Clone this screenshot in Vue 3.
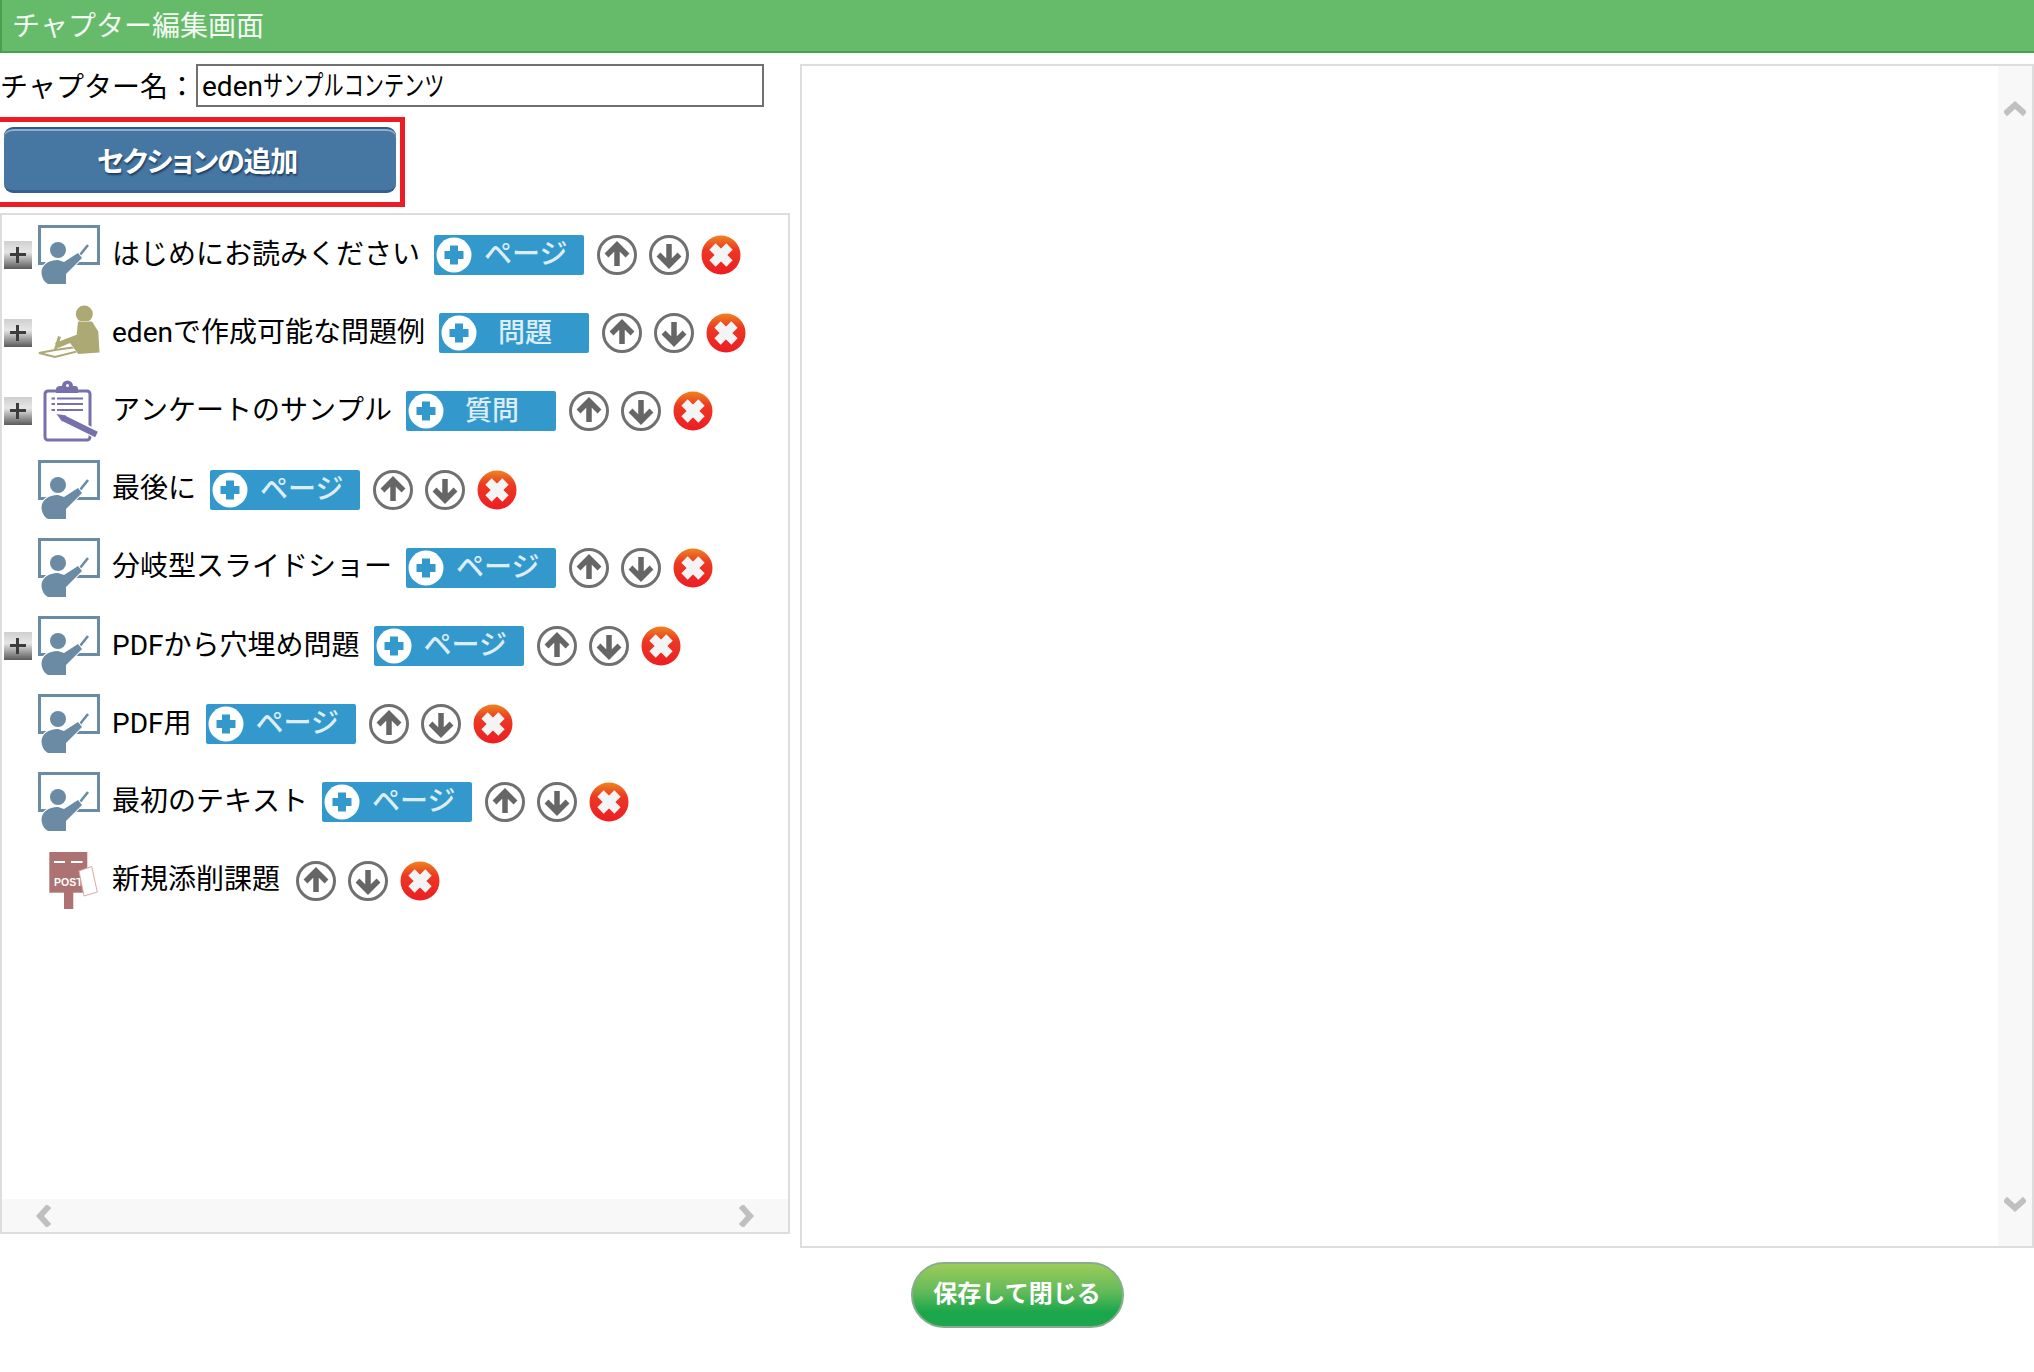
<script setup>
const sections = [
  { id: 1, icon: "teacher", label: "はじめにお読みください", add: "ページ", open: true },
  { id: 2, icon: "student", label: "edenで作成可能な問題例", add: "問題", open: true },
  { id: 3, icon: "survey", label: "アンケートのサンプル", add: "質問", open: true },
  { id: 4, icon: "teacher", label: "最後に", add: "ページ", open: false },
  { id: 5, icon: "teacher", label: "分岐型スライドショー", add: "ページ", open: false },
  { id: 6, icon: "teacher", label: "PDFから穴埋め問題", add: "ページ", open: true },
  { id: 7, icon: "teacher", label: "PDF用", add: "ページ", open: false },
  { id: 8, icon: "teacher", label: "最初のテキスト", add: "ページ", open: false },
  { id: 9, icon: "post", label: "新規添削課題", add: "", open: false },
];
</script>

<template>
  <div class="page">
    <header class="title">チャプター編集画面</header>

    <main class="main">
      <div class="left">
        <div class="name-row">
          <span class="name-label">チャプター名：</span>
          <div class="name-input" role="textbox">eden<span class="narrow">サンプルコンテンツ</span></div>
        </div>

        <div class="add-frame">
          <button class="add-section">セクションの追加</button>
        </div>

        <div class="tree">
          <ul class="rows">
            <li v-for="s in sections" :key="s.id" class="row">
              <span class="toggle-slot">
                <span v-if="s.open" class="toggle"></span>
              </span>

              <svg v-if="s.icon === 'teacher'" class="kind" viewBox="0 0 62 60">
                <rect x="1.5" y="1.5" width="59" height="37" fill="#fff" stroke="#6b8ba4" stroke-width="3" />
                <path d="M42 30 50 20" stroke="#6b8ba4" stroke-width="2.6" />
                <path
                  d="M3.5 47C4 40 10 35 20 35L26 37 40 28 44 33 31 46 28 49V59H10C6 57 3.5 52 3.5 47Z"
                  fill="#6b8ba4"
                  stroke="#fff"
                  stroke-width="2"
                  paint-order="stroke"
                />
                <circle cx="20" cy="25" r="8" fill="#6b8ba4" />
              </svg>

              <svg v-else-if="s.icon === 'student'" class="kind" viewBox="0 0 62 60">
                <circle cx="46.3" cy="11" r="8.5" fill="#ada974" />
                <path d="M1 50 17 47 42 43.5 41 48 17 54Z" fill="none" stroke="#ada974" stroke-width="2" />
                <path
                  d="M40 18.5H54L60.3 28.5 61.5 49.5 40.3 51 32 40 20.3 45 17 40 38.7 31.7Z"
                  fill="#ada974"
                  stroke="#fff"
                  stroke-width="1"
                  paint-order="stroke"
                />
                <path d="M21.5 33.5 17.5 46.5" stroke="#ada974" stroke-width="3" />
              </svg>

              <svg v-else-if="s.icon === 'survey'" class="kind" viewBox="0 0 62 60">
                <rect x="7" y="16" width="45" height="49" rx="3" fill="#fff" stroke="#7670ad" stroke-width="3" transform="translate(0 -6)" />
                <path d="M18 14V10C18 8 20 7 22 7H24A4 4 0 1 1 35 7H37C39 7 40 8 40 10V14Z" fill="#7670ad" transform="translate(0 -2)" />
                <circle cx="29.500" cy="4.500" r="1.500" fill="#fff" />
                <path d="M19 17.500H45M19 23H45M19 29H45" stroke="#7670ad" stroke-width="2.200" />
                <path d="M13.500 17.500H17M13.500 23H17M13.500 29H17" stroke="#7670ad" stroke-width="2.200" />
                <path d="M19 33.500 57 52.500" stroke="#fff" stroke-width="9" />
                <path d="M25 37 58.500 53.500" stroke="#7670ad" stroke-width="6" />
                <path d="M18.500 33 28 34.500 24 40.500Z" fill="#7670ad" />
              </svg>

              <svg v-else class="kind" viewBox="0 0 62 60">
                <rect x="11.300" y="1" width="38" height="40.700" fill="#ad7272" />
                <rect x="26" y="41" width="9.300" height="17" fill="#ad7272" />
                <path d="M16 11H27M33 11H44.500" stroke="#fff" stroke-width="2" />
                <text x="16" y="34.500" class="post-text">POST</text>
                <path d="M41 20 53.700 15.500 59.300 41 46 45Z" fill="#fff" stroke="#d9a9a9" stroke-width="1" />
              </svg>

              <span class="label">{{ s.label }}</span>

              <button v-if="s.add" class="add-child">
                <svg class="plus" viewBox="0 0 36 36">
                  <circle cx="18" cy="18" r="17.500" fill="#fff" />
                  <path d="M18 8.500V27.500M8.500 18H27.500" stroke="#3399cc" stroke-width="8" />
                </svg>
                <span class="add-text" :class="{ short: s.add.length === 2 }">{{ s.add }}</span>
              </button>

              <span class="actions" :class="{ bare: !s.add }">
                <svg class="act" viewBox="0 0 40 40">
                  <circle cx="20" cy="20" r="18.500" fill="none" stroke="#707070" stroke-width="3" />
                  <path d="M20 31V11M9.500 20.500 20 10 30.500 20.500" fill="none" stroke="#666" stroke-width="5.500" />
                </svg>
                <svg class="act" viewBox="0 0 40 40">
                  <circle cx="20" cy="20" r="18.500" fill="none" stroke="#707070" stroke-width="3" />
                  <path d="M20 9V29M9.500 19.500 20 30 30.500 19.500" fill="none" stroke="#666" stroke-width="5.500" />
                </svg>
                <svg class="act" viewBox="0 0 40 40">
                  <defs>
                    <linearGradient id="redball" x1="0" y1="0" x2="0" y2="1">
                      <stop offset="0" stop-color="#ee8420" />
                      <stop offset="0.35" stop-color="#ec3a22" />
                      <stop offset="1" stop-color="#ed1c24" />
                    </linearGradient>
                  </defs>
                  <circle cx="20" cy="20" r="19.500" fill="url(#redball)" />
                  <path d="M11.500 11.500 28.500 28.500M28.500 11.500 11.500 28.500" stroke="#f4f4f4" stroke-width="9" />
                </svg>
              </span>
            </li>
          </ul>

          <div class="hbar">
            <svg class="chev-h" viewBox="0 0 18 22"><path d="M14 1 5 11 14 21" fill="none" stroke="#c0c0c0" stroke-width="6" /></svg>
            <svg class="chev-h" viewBox="0 0 18 22"><path d="M4 1 13 11 4 21" fill="none" stroke="#c0c0c0" stroke-width="6" /></svg>
          </div>
        </div>
      </div>

      <div class="preview">
        <div class="vbar">
          <svg class="chev-v" viewBox="0 0 22 18"><path d="M1 14 11 5 21 14" fill="none" stroke="#c0c0c0" stroke-width="6" /></svg>
          <svg class="chev-v" viewBox="0 0 22 18"><path d="M1 4 11 13 21 4" fill="none" stroke="#c0c0c0" stroke-width="6" /></svg>
        </div>
      </div>
    </main>

    <footer class="foot">
      <button class="save">保存して閉じる</button>
    </footer>
  </div>
</template>

<style scoped>
.page {
  width: 2034px;
  height: 1372px;
  overflow: hidden;
  background: #fff;
  color: #000;
  font-family: Roboto, "Noto Sans CJK JP", sans-serif;
  font-size: 28px;
  font-kerning: none;
}

.title {
  box-sizing: border-box;
  height: 53px;
  padding: 2px 0 0 10px;
  line-height: 49px;
  color: #f2f8f2;
  background: #66bb6a;
  border-left: 2px solid #4a9e4c;
  border-bottom: 2px solid #4a9e4c;
}

.main {
  display: flex;
  gap: 10px;
  margin-top: 11px;
  height: 1184px;
}

.left {
  display: flex;
  flex-direction: column;
  width: 790px;
  height: 1170px;
  flex-shrink: 0;
}

.name-row {
  display: flex;
  align-items: center;
  height: 43px;
}

.name-label {
  box-sizing: border-box;
  width: 196px;
  flex-shrink: 0;
  padding-top: 5px;
  line-height: 38px;
}

.name-input {
  box-sizing: border-box;
  width: 568px;
  height: 43px;
  padding: 2px 4px 0;
  border: 2px solid #707070;
  line-height: 37px;
  white-space: nowrap;
}

.narrow {
  display: inline-block;
  transform: scaleX(0.72);
  transform-origin: left center;
}

.add-frame {
  box-sizing: border-box;
  width: 405px;
  height: 90px;
  margin-top: 10px;
  padding: 5px 4px;
  border: solid #ed1c24;
  border-width: 5px 5px 5px 0;
}

.add-section {
  display: block;
  width: 392px;
  height: 66px;
  padding: 0 6px 0 0;
  border: none;
  border-top: 2px solid #2f5a84;
  border-bottom: 3px solid #35608a;
  border-radius: 9px;
  background: #4677a3;
  box-shadow: inset 0 2px 0 #8fb0cc;
  color: #fff;
  font-family: inherit;
  font-size: 28px;
  font-weight: 700;
  letter-spacing: -1.2px;
  font-feature-settings: "palt";
  text-shadow: 1px 2px 2px #1f3f60;
}

.tree {
  box-sizing: border-box;
  display: flex;
  flex-direction: column;
  height: 1021px;
  margin-top: 6px;
  border: 2px solid #ddd;
}

.rows {
  flex: 1;
  margin: 0;
  padding: 1px 0 0;
  list-style: none;
}

.row {
  display: flex;
  align-items: center;
  height: 78.2px;
}

.toggle-slot {
  display: flex;
  width: 36px;
  flex-shrink: 0;
  padding-left: 2px;
  box-sizing: border-box;
}

.toggle {
  position: relative;
  width: 28px;
  height: 28px;
  background: linear-gradient(#cfcfcf, #e6e6e6 40%, #a0a0a0 70%, #5a5a5a);
}

.toggle::before,
.toggle::after {
  content: "";
  position: absolute;
  background: #3c3c3c;
}

.toggle::before {
  left: 6px;
  right: 6px;
  top: 12px;
  height: 3px;
}

.toggle::after {
  top: 6px;
  bottom: 6px;
  left: 12px;
  width: 3px;
}

.kind {
  width: 62px;
  height: 60px;
  flex-shrink: 0;
  overflow: visible;
}

.post-text {
  fill: #fff;
  font-family: "Liberation Sans", sans-serif;
  font-size: 10.5px;
  font-weight: 700;
}

.label {
  margin: 0 0 7px 12px;
  white-space: nowrap;
}

.add-child {
  display: flex;
  align-items: center;
  width: 150px;
  height: 40px;
  margin-left: 14px;
  padding: 0 0 0 2px;
  flex-shrink: 0;
  border: none;
  border-radius: 2px;
  background: #3399cc;
  color: #dcedf6;
  font-family: inherit;
  font-size: 28px;
  font-weight: 500;
}

.plus {
  width: 36px;
  height: 36px;
  flex-shrink: 0;
}

.add-text {
  margin-left: 12px;
  line-height: 40px;
}

.add-text.short {
  margin-left: 21px;
  font-size: 27px;
}

.actions {
  display: flex;
  gap: 12px;
  margin-left: 13px;
}

.actions.bare {
  margin-left: 16px;
}

.act {
  width: 40px;
  height: 40px;
}

.hbar {
  display: flex;
  align-items: center;
  justify-content: space-between;
  height: 33px;
  padding: 0 33px;
  background: #f8f8f8;
}

.chev-h {
  width: 18px;
  height: 22px;
}

.preview {
  box-sizing: border-box;
  flex: 1;
  display: flex;
  justify-content: flex-end;
  border: 2px solid #ddd;
}

.vbar {
  display: flex;
  flex-direction: column;
  align-items: center;
  justify-content: space-between;
  box-sizing: border-box;
  width: 34px;
  padding: 34px 0 33px;
  background: #f8f8f8;
}

.chev-v {
  width: 22px;
  height: 18px;
}

.foot {
  display: flex;
  justify-content: center;
  margin-top: 14px;
}

.save {
  box-sizing: border-box;
  width: 213px;
  height: 66px;
  padding: 0 0 7px;
  border: 2px solid #86ae8e;
  border-radius: 33px;
  background: linear-gradient(#9ccb5a, #62ba5a 45%, #1aa64a 78%, #1fa64c);
  color: #fff;
  font-family: inherit;
  font-size: 24px;
  font-weight: 700;
}
</style>

<style>
html,
body {
  margin: 0;
  background: #fff;
}
</style>
